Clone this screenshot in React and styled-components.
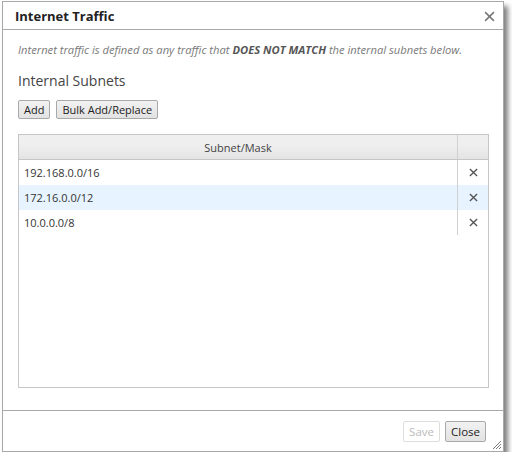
import React from 'react'
import styled, { createGlobalStyle } from 'styled-components'

const Global = createGlobalStyle`
  html, body { margin: 0; padding: 0; background: #fff; }
  body { font-family: "Open Sans", "DejaVu Sans", sans-serif; }
`

const Dialog = styled.div`
  position: relative;
  margin: 1px 0 0 2px;
  width: 500px;
  height: 449px;
  border: 1px solid #a8a8a8;
  background: #fff;
  box-shadow: 4px 5px 5px rgba(0,0,0,0.5);
  display: flex;
  flex-direction: column;
  color: #333;
`

const TitleBar = styled.div`
  height: 27px;
  border-bottom: 1px solid #a8a8a8;
  display: flex;
  align-items: center;
  justify-content: space-between;
  padding: 0 8px 0 12px;
  & h1 {
    margin: 0;
    font-size: 13px;
    font-weight: 700;
    color: #222;
  }
`

const CloseX = styled.span`
  display: flex;
  width: 11px;
  height: 11px;
  margin-top: 2px;
`

const Body = styled.div`
  flex: 1;
  padding: 12px 14px 22px 15px;
  display: flex;
  flex-direction: column;
`

const Intro = styled.p`
  margin: 0;
  font-size: 11.2px;
  line-height: 16px;
  font-style: italic;
  color: #7a7a7a;
  & b { color: #555; }
`

const Heading = styled.h2`
  margin: 13px 0 10px;
  font-size: 14px;
  font-weight: 400;
  color: #444;
`

const Toolbar = styled.div`
  display: flex;
  gap: 6px;
`

const Button = styled.button`
  height: 19px;
  padding: 0 ${p => p.$pad || 5}px;
  font-family: inherit;
  font-size: 11px;
  color: ${p => (p.disabled ? '#bbb' : '#222')};
  background: ${p => (p.disabled ? '#fff' : 'linear-gradient(#f2f2f2, #e2e2e2)')};
  border: 1px solid ${p => (p.disabled ? '#ddd' : '#a9a9a9')};
  border-radius: 2px;
  line-height: 17px;
`

const Grid = styled.div`
  margin-top: 15px;
  flex: 1;
  border: 1px solid #c6c6c6;
  display: flex;
  flex-direction: column;
`

const Row = styled.div`
  display: grid;
  grid-template-columns: 1fr 31px;
  height: 25px;
  background: ${p => (p.$alt ? '#e7f3fe' : '#fff')};
  & > div {
    display: flex;
    align-items: center;
    font-size: 11px;
    color: #333;
  }
  & > div:first-child { padding-left: 5px; }
  & > div:last-child {
    justify-content: center;
    border-left: 1px solid #d0d0d0;
  }
`

const HeadRow = styled(Row)`
  height: 24px;
  background: linear-gradient(#efefef 0, #efefef 40%, #e4e4e4 100%);
  border-bottom: 1px solid #c6c6c6;
  & > div:first-child {
    justify-content: center;
    padding-left: 0;
    color: #444;
  }
`

const Footer = styled.div`
  height: 40px;
  border-top: 1px solid #a8a8a8;
  display: flex;
  justify-content: flex-end;
  align-items: center;
  gap: 5px;
  padding: 0 17px 0 0;
  & button { height: 21px; font-size: 11.5px; padding: 0 5px; }
`

const Grip = styled.svg`
  position: absolute;
  right: 1px;
  bottom: 1px;
`

const Cross = ({ size = 9, color = '#555', w = 1.5 }) => (
  <svg width={size} height={size} viewBox="0 0 10 10">
    <path d="M1 1L9 9M9 1L1 9" stroke={color} strokeWidth={w} />
  </svg>
)

const subnets = ['192.168.0.0/16', '172.16.0.0/12', '10.0.0.0/8']

export default function App() {
  return (
    <>
      <Global />
      <Dialog>
        <TitleBar>
          <h1>Internet Traffic</h1>
          <CloseX><Cross size={11} color="#777" w={1.4} /></CloseX>
        </TitleBar>
        <Body>
          <Intro>
            Internet traffic is defined as any traffic that <b>DOES NOT MATCH</b> the internal subnets below.
          </Intro>
          <Heading>Internal Subnets</Heading>
          <Toolbar>
            <Button>Add</Button>
            <Button>Bulk Add/Replace</Button>
          </Toolbar>
          <Grid>
            <HeadRow>
              <div>Subnet/Mask</div>
              <div></div>
            </HeadRow>
            {subnets.map((s, i) => (
              <Row key={s} $alt={i === 1}>
                <div>{s}</div>
                <div><Cross /></div>
              </Row>
            ))}
          </Grid>
        </Body>
        <Footer>
          <Button disabled>Save</Button>
          <Button>Close</Button>
        </Footer>
        <Grip width="11" height="11" viewBox="0 0 11 11">
          <path d="M10 2L2 10M10 5L5 10M10 8L8 10" stroke="#777" strokeWidth="1" />
        </Grip>
      </Dialog>
    </>
  )
}
